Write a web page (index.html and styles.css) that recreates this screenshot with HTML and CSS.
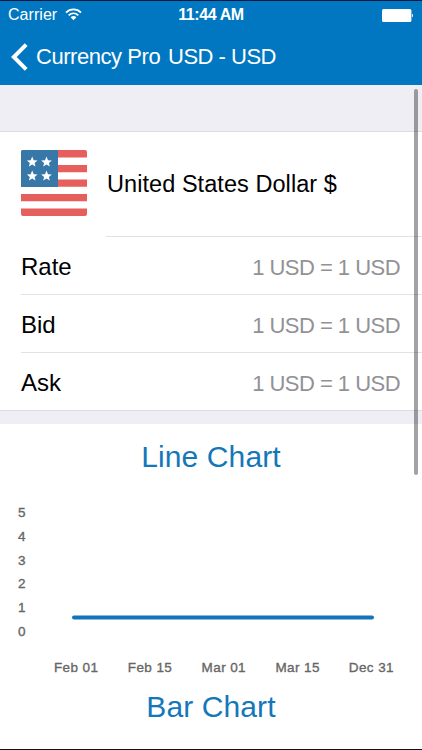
FILE: index.html
```html
<!DOCTYPE html>
<html lang="en">
<head>
<meta charset="utf-8">
<title>Currency Pro</title>
<link rel="stylesheet" href="styles.css">
</head>
<body>
<div class="screen">
  <header class="header">
    <div class="status">
      <div class="carrier"><span>Carrier</span>
        <svg class="wifi" width="17" height="13" viewBox="0 0 17 13"><g fill="none" stroke="#fff" stroke-width="1.8"><path d="M1 4.6C5.2.4 11.8.4 16 4.6"/><path d="M3.7 7.3C6.5 4.6 10.5 4.6 13.3 7.3"/></g><path fill="#fff" d="M5.6 9.2C7.3 7.6 9.7 7.6 11.4 9.2L8.5 12.2Z"/></svg>
      </div>
      <span class="time">11:44 AM</span>
      <svg class="battery" width="32" height="13" viewBox="0 0 32 13"><rect width="29.4" height="13" rx="1.5" fill="#fff"/><path fill="#fff" d="M30 4.5q2 2 0 4z"/></svg>
    </div>
    <nav class="nav">
      <svg class="back" width="18" height="28" viewBox="0 0 18 28"><path d="M15.2 1.6L2.8 14L15.2 26.4" fill="none" stroke="#fff" stroke-width="4"/></svg>
      <span class="parent">Currency Pro</span>
      <span class="title">USD - USD</span>
    </nav>
  </header>
  <div class="gap gap-top"></div>
  <main>
    <section class="country">
      <svg class="flag" width="66" height="66" viewBox="0 0 66 66">
        <defs><clipPath id="round"><rect width="66" height="66" rx="2"/></clipPath>
        <path id="star" d="M0-5.5L1.5-1.8L5.3-1.6L2.4.9L3.3 4.6L0 2.5L-3.3 4.6L-2.4.9L-5.3-1.6L-1.5-1.8Z"/></defs>
        <g clip-path="url(#round)"><path fill="#fff" d="M0 0h66v66H0z"/><path fill="#e65f5c" d="M0 0h66v7.5H0zM0 15h66v7.3H0zM0 29.5h66v7.3H0zM0 44h66v7.3H0zM0 58.5h66V66H0z"/><path fill="#3878a8" d="M0 0h37v37H0z"/></g>
        <g fill="#fff"><use href="#star" x="11.2" y="12"/><use href="#star" x="25.5" y="12"/><use href="#star" x="11.2" y="26"/><use href="#star" x="25.5" y="26"/></g>
      </svg>
      <h1 class="name">United States Dollar $</h1>
    </section>
    <dl class="rates">
      <div class="row"><dt>Rate</dt><dd>1 USD = 1 USD</dd></div>
      <div class="row"><dt>Bid</dt><dd>1 USD = 1 USD</dd></div>
      <div class="row"><dt>Ask</dt><dd>1 USD = 1 USD</dd></div>
    </dl>
    <div class="gap gap-mid"></div>
    <section>
      <h2 class="heading">Line Chart</h2>
      <div class="chart">
        <div class="scale"><span>5</span><span>4</span><span>3</span><span>2</span><span>1</span><span>0</span></div>
        <svg class="plot" width="304" height="142" viewBox="0 0 304 142"><path d="M3 116.4H301" stroke="#1274b9" stroke-width="4" stroke-linecap="round"/></svg>
      </div>
      <div class="dates"><span>Feb 01</span><span>Feb 15</span><span>Mar 01</span><span>Mar 15</span><span>Dec 31</span></div>
      <h2 class="heading bar">Bar Chart</h2>
    </section>
  </main>
  <div class="scrollbar"></div>
</div>
</body>
</html>
```
FILE: styles.css
```css
* { box-sizing: border-box; margin: 0; padding: 0; }
body { background: #fff; font-family: "Liberation Sans", Arial, sans-serif; color: #000; }
.screen { position: relative; width: 422px; height: 750px; overflow: hidden; border-top: 1px solid #081a3c; border-bottom: 1px solid #111; background: #fff; }
svg { display: block; flex: none; }
.header { height: 84px; background: #0077c0; color: #fff; }
.status { display: grid; grid-template-columns: 1fr auto 1fr; align-items: center; height: 28px; padding: 0 8px; font-size: 16px; line-height: 28px; }
.carrier { display: flex; align-items: center; gap: 8px; letter-spacing: 0.05px; }
.wifi { margin-top: -2px; }
.time { font-weight: bold; letter-spacing: -0.4px; }
.battery { justify-self: end; }
.nav { display: flex; align-items: center; height: 55px; padding-left: 11px; font-size: 22px; line-height: 57px; white-space: nowrap; }
.parent { margin-left: 7px; width: 132px; letter-spacing: -0.45px; }
.title { letter-spacing: -0.5px; }
.gap { background: #efeef4; }
.gap-top { height: 47px; border-bottom: 1px solid #dddce2; }
.gap-mid { height: 14px; border-top: 1px solid #dddce2; }
.country { display: flex; height: 104px; padding: 18px 0 0 21px; }
.name { flex: 1; margin-left: 20px; font-size: 23.5px; font-weight: normal; line-height: 36px; padding-top: 16px; letter-spacing: 0.06px; }
.rates { margin-left: 21px; }
.row { display: flex; justify-content: space-between; align-items: center; height: 58px; padding-right: 22px; border-top: 1px solid #e2e2e5; }
.row:first-child { border-image: linear-gradient(90deg, transparent 86px, #e2e2e5 86px) 1; }
dt { font-size: 24px; padding-top: 2px; }
dd { font-size: 22px; color: #929296; padding-top: 4px; letter-spacing: -0.53px; }
.heading { height: 64px; text-align: center; font-size: 30px; font-weight: normal; line-height: 66px; letter-spacing: 0.1px; color: #1477b9; }
.chart { display: flex; height: 142px; margin-top: 13px; }
.scale { display: grid; grid-template-rows: repeat(6, 23.7px); width: 71px; padding-left: 18px; align-items: center; }
.scale, .dates { font-size: 13.5px; color: #666; -webkit-text-stroke: 0.35px #666; }
.dates { display: grid; grid-template-columns: repeat(5, 73.8px); margin-left: 39.3px; height: 47px; line-height: 49px; text-align: center; letter-spacing: 0.4px; }
.bar { height: 60px; line-height: 34px; }
.scrollbar { position: absolute; top: 88px; left: 414px; width: 4px; height: 386px; border-radius: 2px; background: rgba(0, 0, 0, 0.36); }
```
